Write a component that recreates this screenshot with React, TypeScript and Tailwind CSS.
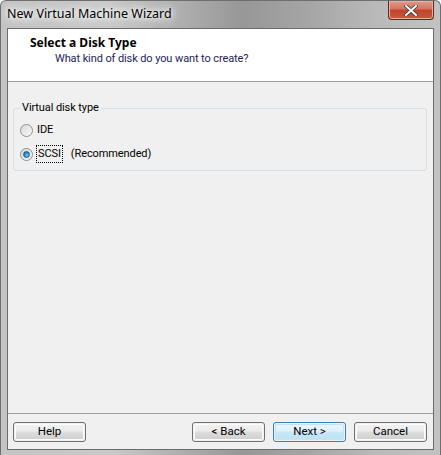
import React from "react";

const font = "font-['Roboto','Noto_Sans',sans-serif]";

function Radio({ checked }: { checked?: boolean }) {
  return (
    <span className="relative flex h-[13px] w-[13px] items-center justify-center rounded-full border border-[#8e8f8f] bg-[linear-gradient(135deg,#d8d8d8,#fbfbfb)]">
      <span className="flex h-[9px] w-[9px] items-center justify-center rounded-full bg-[linear-gradient(135deg,#dcdcdc,#f7f7f7)]">
        {checked && (
          <span className="h-[7px] w-[7px] rounded-full border border-[#1b5a8e] bg-[radial-gradient(circle_at_60%_65%,#7fd0f5_0%,#2a83c4_55%,#17497a_100%)]" />
        )}
      </span>
    </span>
  );
}

function Btn({ children, def }: { children: React.ReactNode; def?: boolean }) {
  return (
    <div
      className={`flex h-[20px] w-[73px] items-center justify-center rounded-[3px] border ${
        def ? "border-[#3c7fb1]" : "border-[#707070]"
      } p-px`}
    >
      <div
        className={`flex h-full w-full items-center justify-center rounded-[2px] ${
          def
            ? "bg-[linear-gradient(#eaf6fd_0%,#e0f1fb_45%,#c9e7f7_50%,#bde1f5_100%)] shadow-[inset_0_0_0_1px_#c2e4f6]"
            : "bg-[linear-gradient(#f2f2f2_0%,#ebebeb_45%,#dddddd_50%,#cfcfcf_100%)] shadow-[inset_0_0_0_1px_#fcfcfc]"
        } text-[11.5px] leading-none text-black`}
      >
        {children}
      </div>
    </div>
  );
}

export default function App() {
  return (
    <div className={`${font} flex h-[455px] w-[441px] flex-col overflow-hidden rounded-t-[6px] border-x border-t border-[#6e6e6e] bg-[linear-gradient(90deg,#c4c4c4_0%,#c9c9c9_25%,#b0b0b0_40%,#979797_55%,#a5a5a5_70%,#b9b9b9_85%,#c2c2c2_100%)]`}>
      {/* title bar */}
      <div className="flex h-[27px] shrink-0 items-start justify-between">
        <div className="pl-[6px] pt-[5px] font-['Noto_Sans',sans-serif] text-[12.5px] leading-[16px] text-black [text-shadow:0_0_8px_#ffffff,0_0_12px_#ffffff,0_0_4px_#ffffff]">
          New Virtual Machine Wizard
        </div>
        <div className="mr-[6px] flex h-[19px] w-[46px] items-center justify-center rounded-b-[4px] border border-t-0 border-[#5c2a22] bg-[linear-gradient(#e09a8a_0%,#d27460_45%,#c0422b_50%,#c75a3c_100%)] shadow-[inset_0_0_0_1px_#e8b0a4]">
          <svg width="14" height="11" viewBox="0 0 14 11">
            <path d="M2 1 L12 10 M12 1 L2 10" stroke="#3a3a3a" strokeWidth="3.6" strokeLinecap="square" />
            <path d="M2 1 L12 10 M12 1 L2 10" stroke="#ffffff" strokeWidth="2" strokeLinecap="square" />
          </svg>
        </div>
      </div>
      {/* body */}
      <div className="flex flex-1 flex-col px-[6px] pb-[5px]">
        <div className="flex flex-1 flex-col border border-[#6b6b6b] bg-[#f0f0f0]">
          {/* header */}
          <div className="h-[53px] shrink-0 border-b border-[#a0a0a0] bg-white pl-[22px] pt-[6px]">
            <div className="font-['Noto_Sans',sans-serif] text-[12px] font-bold leading-[16px] text-black">Select a Disk Type</div>
            <div className="pl-[25px] text-[11px] leading-[16px] tracking-[-0.1px] text-[#1e1e5a]">What kind of disk do you want to create?</div>
          </div>
          {/* group */}
          <div className="mx-[5px] mr-[6px] mt-[26px] flex h-[63px] flex-col rounded-[3px] border border-[#d5dfe5] pl-[6px] text-[11px] tracking-[-0.1px]">
            <div className="-mt-[9px] w-fit bg-[#f0f0f0] px-[2px] leading-[16px] text-black">Virtual disk type</div>
            <div className="mt-[6px] flex items-center gap-[3px] leading-[16px] text-black">
              <Radio />
              <span className="px-[1px]">IDE</span>
            </div>
            <div className="mt-[7px] flex items-center gap-[3px] leading-[16px] text-black">
              <Radio checked />
              <span className="border border-dotted border-black px-px">SCSI</span>
              <span className="ml-[5px]">(Recommended)</span>
            </div>
          </div>
          <div className="flex-1" />
          {/* footer */}
          <div className="border-t border-[#a0a0a0]" />
          <div className="flex h-[35px] items-start pl-[5px] pr-[6px] pt-[8px]">
            <Btn>Help</Btn>
            <div className="flex-1" />
            <div className="flex gap-[8px]">
              <Btn>&lt; Back</Btn>
              <Btn def>Next &gt;</Btn>
              <Btn>Cancel</Btn>
            </div>
          </div>
        </div>
      </div>
    </div>
  );
}
